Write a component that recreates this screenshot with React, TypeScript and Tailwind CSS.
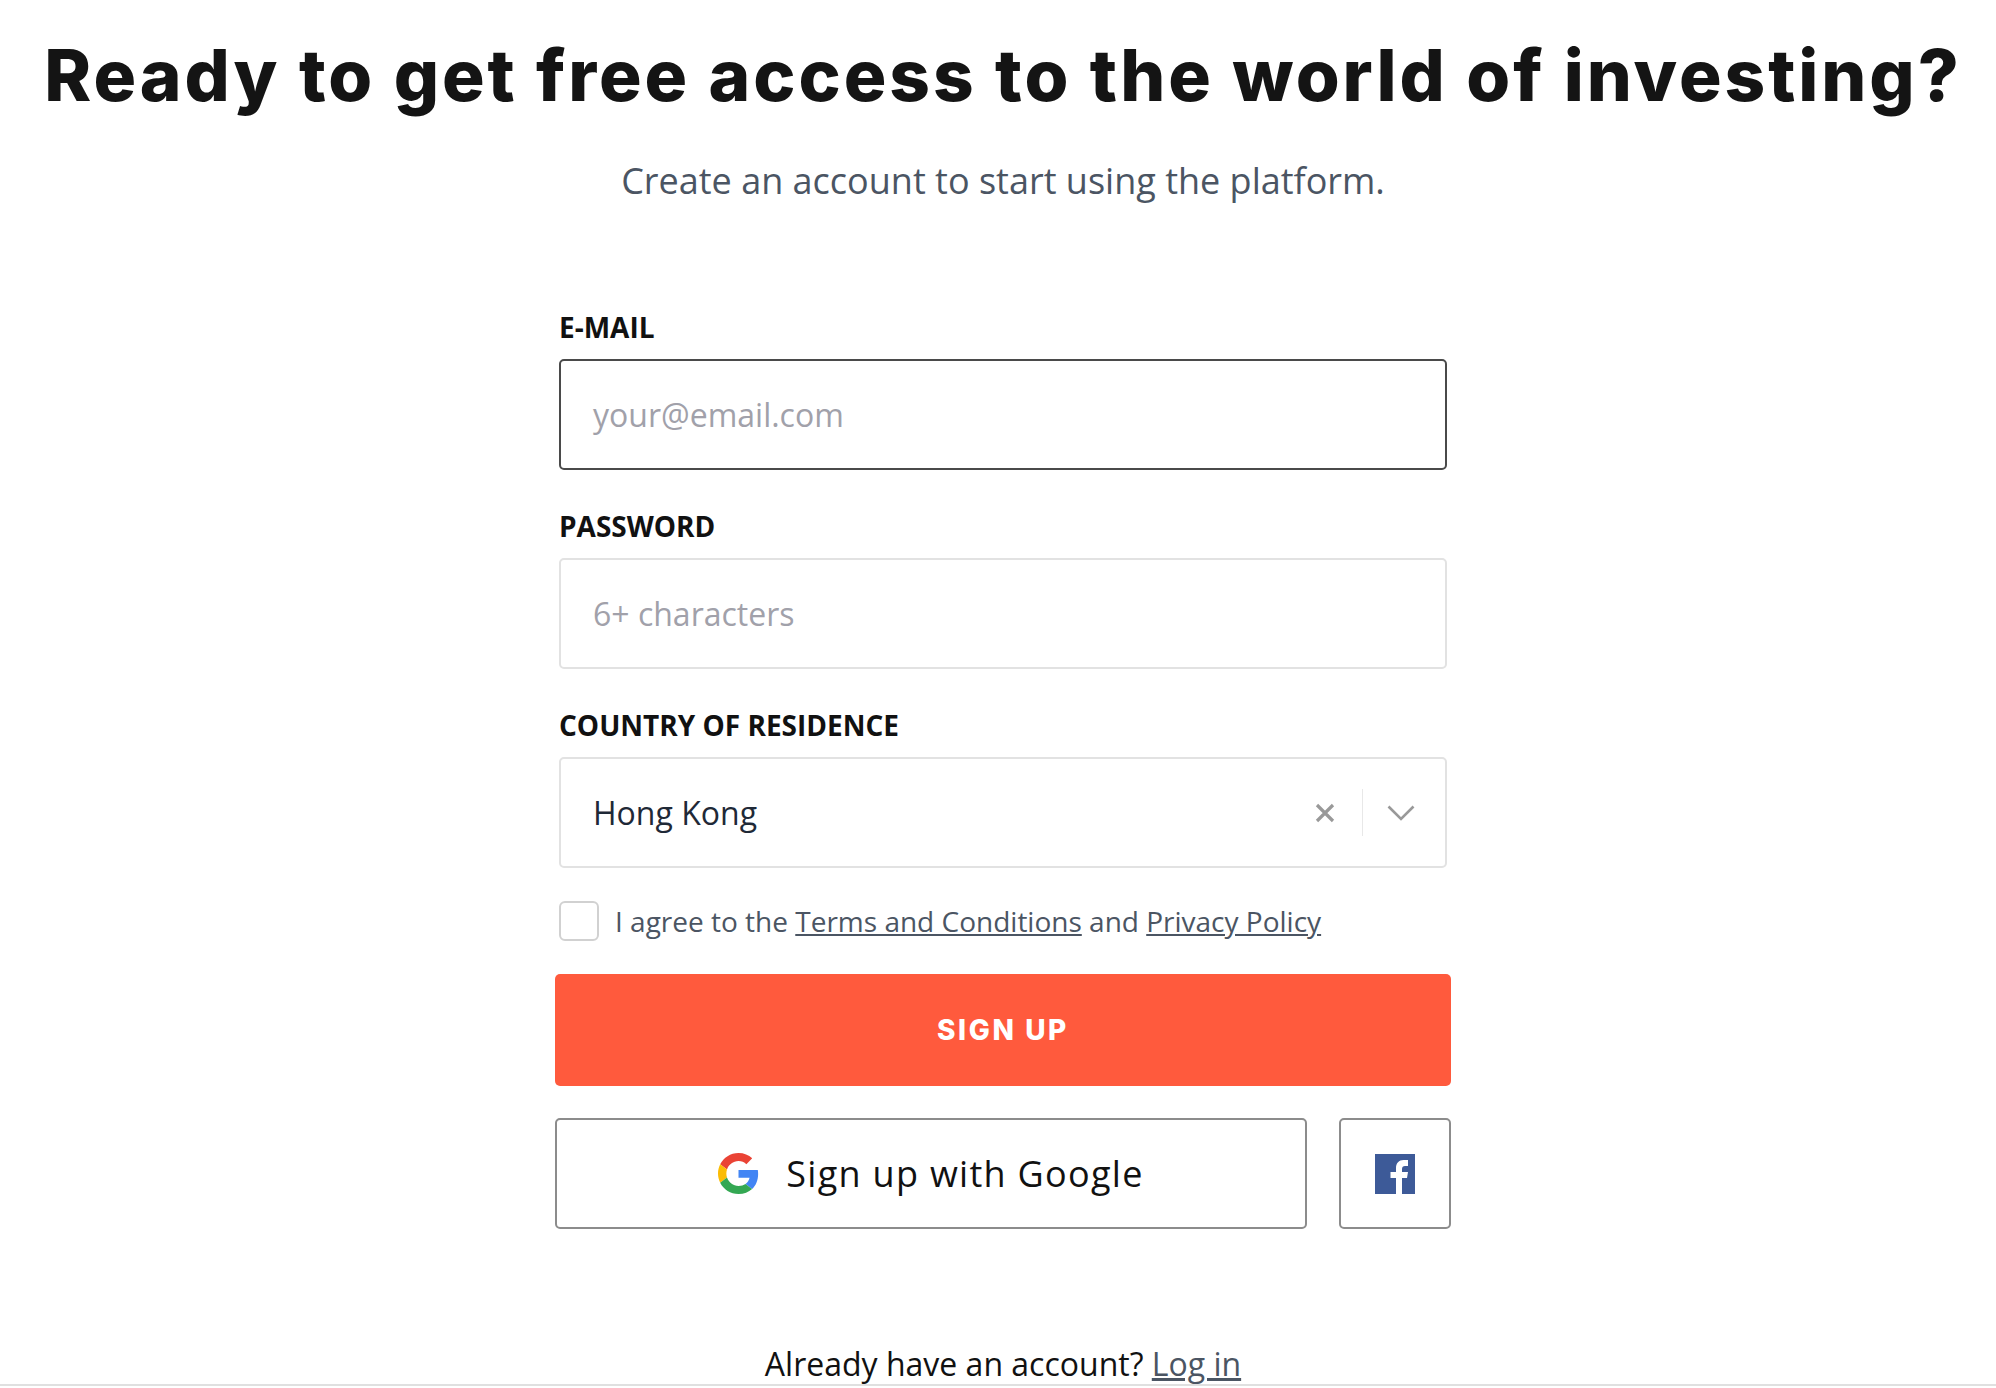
const sans = "font-['Open_Sans',sans-serif]";

function Label({ children }: { children: React.ReactNode }) {
  return <label className="block h-[51px] text-[28px] leading-[38px] font-bold text-[#111111]">{children}</label>;
}

function GoogleIcon() {
  return (
    <svg width="41" height="41" viewBox="0 0 48 48">
      <path fill="#EA4335" d="M24 9.5c3.54 0 6.71 1.22 9.21 3.6l6.85-6.85C35.9 2.38 30.47 0 24 0 14.62 0 6.51 5.38 2.56 13.22l7.98 6.19C12.43 13.72 17.74 9.5 24 9.5z" />
      <path fill="#4285F4" d="M46.98 24.55c0-1.57-.15-3.09-.38-4.55H24v9.02h12.94c-.58 2.96-2.26 5.48-4.78 7.18l7.73 6c4.51-4.18 7.09-10.36 7.09-17.65z" />
      <path fill="#FBBC05" d="M10.53 28.59c-.48-1.45-.76-2.99-.76-4.59s.27-3.14.76-4.59l-7.98-6.19C.92 16.46 0 20.12 0 24c0 3.88.92 7.54 2.56 10.78l7.97-6.19z" />
      <path fill="#34A853" d="M24 48c6.48 0 11.93-2.13 15.89-5.81l-7.73-6c-2.15 1.45-4.92 2.3-8.16 2.3-6.26 0-11.57-4.22-13.47-9.91l-7.98 6.19C6.51 42.62 14.62 48 24 48z" />
    </svg>
  );
}

export default function App() {
  return (
    <div className={`${sans} relative h-[1388px] overflow-hidden bg-white pl-[10px] flex flex-col items-center`}>
      <h1 className="mt-[29px] h-[92px] text-[71px] leading-[92px] font-extrabold tracking-[2.95px] text-[#141414] whitespace-nowrap font-['Inter',sans-serif]">
        Ready to get free access to the world of investing?
      </h1>
      <p className="mt-[35px] h-[50px] text-[36px] leading-[50px] text-[#4b5563]">
        Create an account to start using the platform.
      </p>

      <form className="mt-[102px] w-[888px]">
        <Label>E-MAIL</Label>
        <div className="h-[111px] rounded-[5px] border-2 border-[#4a4a4a] pl-[32px] flex items-center text-[32px] text-[#a1a1aa]">
          your@email.com
        </div>

        <div className="mt-[37px]"><Label>PASSWORD</Label></div>
        <div className="h-[111px] rounded-[5px] border-2 border-[#e2e2e2] pl-[32px] flex items-center text-[32px] text-[#a1a1aa]">
          6+ characters
        </div>

        <div className="mt-[37px]"><Label>COUNTRY OF RESIDENCE</Label></div>
        <div className="h-[111px] rounded-[5px] border-2 border-[#e2e2e2] pl-[32px] pr-[30px] flex items-center text-[32px] text-[#1f2937]">
          <span className="flex-1">Hong Kong</span>
          <svg width="22" height="22" viewBox="0 0 22 22" fill="none" stroke="#999999" strokeWidth="3.2" className="-translate-x-[2px]">
            <path d="M3 3l16 16M19 3L3 19" />
          </svg>
          <span className="mx-[24px] h-[47px] w-[1.5px] bg-[#e8e8e8]" />
          <svg width="28" height="16" viewBox="0 0 28 16" fill="none" stroke="#999999" strokeWidth="2.6">
            <path d="M1.5 1.5L14 14 26.5 1.5" />
          </svg>
        </div>

        <div className="mt-[33px] flex items-center gap-[16px] h-[40px]">
          <span className="size-[40px] rounded-[6px] border-2 border-[#d1d1d1]" />
          <span className="text-[28px] text-[#4b5563]">
            I agree to the <a className="underline">Terms and Conditions</a> and <a className="underline">Privacy Policy</a>
          </span>
        </div>

        <div className="-mx-[4px] mt-[33px]">
          <button type="button" className="w-full h-[112px] rounded-[5px] bg-[#ff5a3d] text-white text-[28px] font-extrabold tracking-[2.6px] font-['Inter',sans-serif]">
            SIGN UP
          </button>
          <div className="mt-[32px] flex gap-[32px]">
            <button type="button" className="flex-1 h-[111px] rounded-[5px] border-2 border-[#8c8c8c] flex items-center justify-center gap-[27px] text-[36px] tracking-[1.3px] text-[#111111]">
              <GoogleIcon />
              Sign up with Google
            </button>
            <button type="button" className="w-[112px] h-[111px] rounded-[5px] border-2 border-[#8c8c8c] flex items-center justify-center">
              <svg width="40" height="40" viewBox="0 0 40 40">
                <rect width="40" height="40" fill="#3d5a98" />
                <path fill="#fff" d="M21 40V24h-5.500v-6H21v-4c0-5 3-8 7.500-8H33v6h-3c-2 0-3 1-3 3v3h6l-1 6h-5v16z" />
              </svg>
            </button>
          </div>
        </div>
      </form>

      <p className="mt-[111px] text-[32px] text-[#111111] whitespace-nowrap">
        Already have an account? <a className="underline text-[#4b5563]">Log in</a>
      </p>

      <div className="absolute left-0 right-0 bottom-0 h-[4px] border-t-2 border-[#e0e0e0] bg-white" />
    </div>
  );
}
